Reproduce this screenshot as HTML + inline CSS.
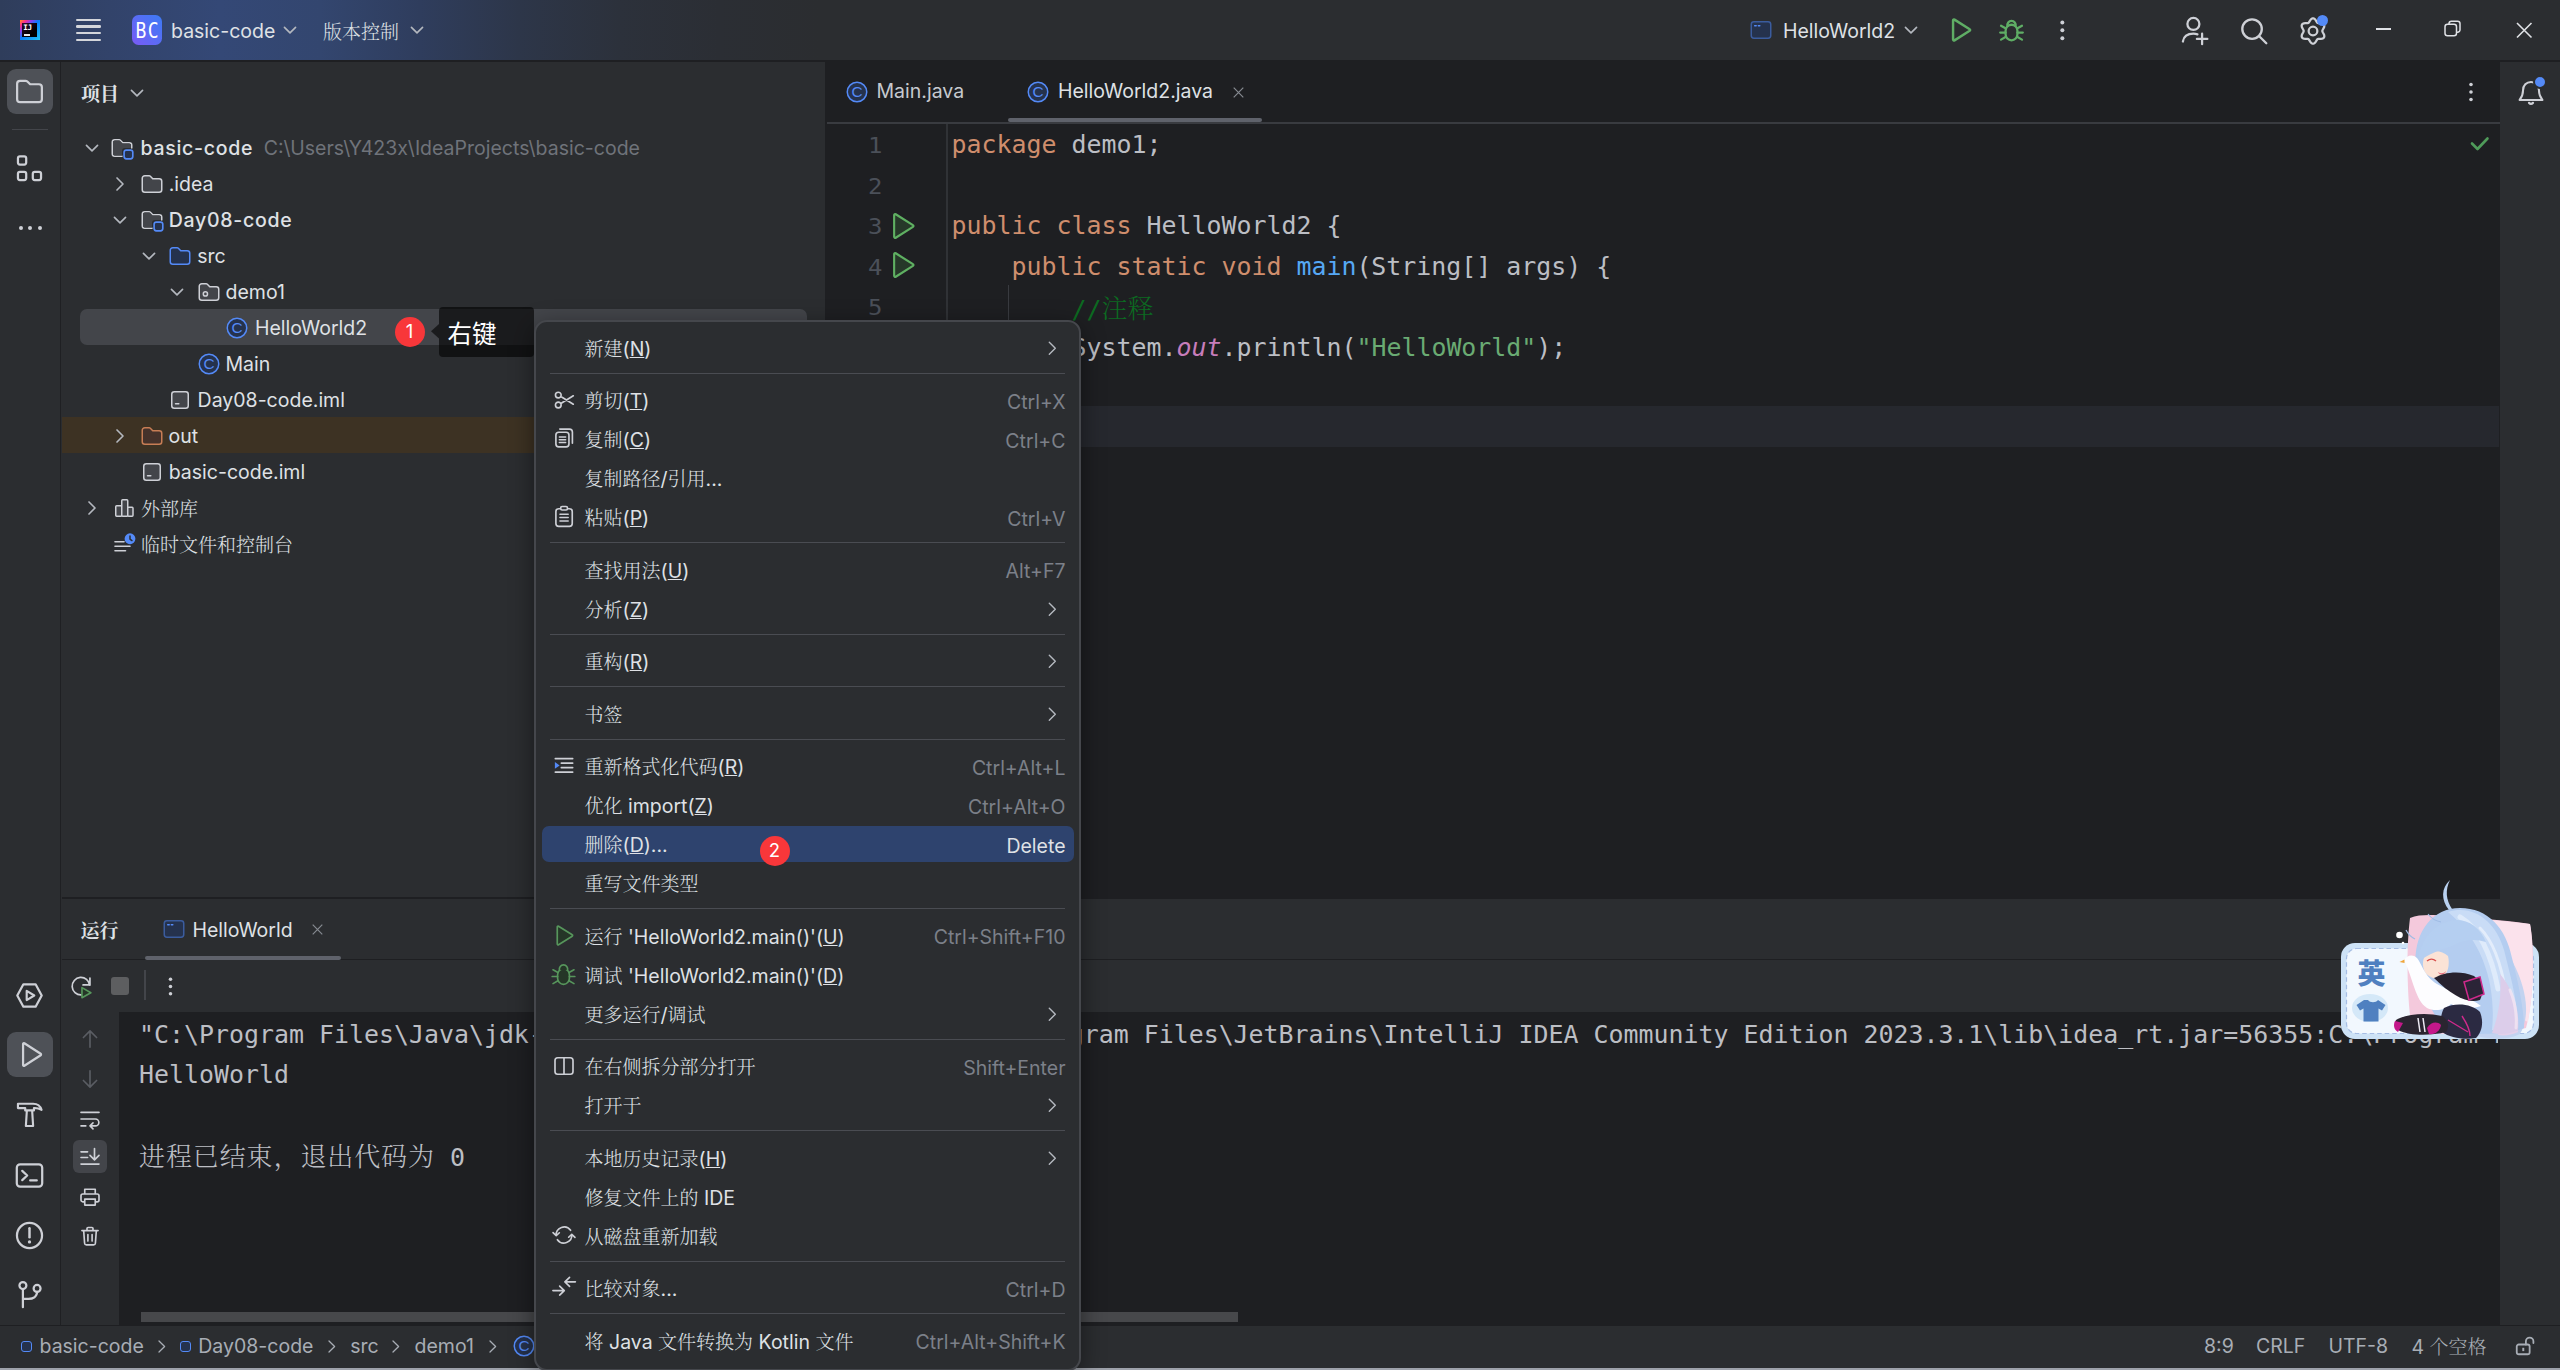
<!DOCTYPE html>
<html lang="zh-CN"><head><meta charset="utf-8"><title>basic-code – HelloWorld2.java</title>
<style>
html,body{margin:0;padding:0}
body{width:2560px;height:1370px;overflow:hidden;position:relative;background:#2b2d30;
 font-family:"Inter","Liberation Sans","Noto Serif CJK SC",sans-serif;font-size:19.5px;color:#dfe1e5;-webkit-font-smoothing:antialiased}
.abs{position:absolute}
.t{position:absolute;white-space:pre;line-height:36px;height:36px}
.g{color:#6f737a}
.b{font-weight:500;letter-spacing:.72px}
.mono{font-family:"DejaVu Sans Mono","Liberation Mono","Noto Serif CJK SC",monospace;font-size:24.92px}
svg{position:absolute;overflow:visible}
.cjk{font-family:"Noto Serif CJK SC","Liberation Serif",serif;font-size:19px;font-weight:300}
u{text-decoration:underline;text-underline-offset:1.3px;text-decoration-thickness:1.4px}
</style></head>
<body>
<div class="abs" style="left:0;top:0;width:2560px;height:60px;background:linear-gradient(90deg,#2f3d5b 0px,#32436a 110px,#344876 220px,#33466f 320px,#2f3d5d 420px,#2d3649 520px,#2c313b 620px,#2b2e34 720px,#2b2d30 820px)"></div>
<div class="abs" style="left:0px;top:60px;width:2560px;height:2px;background:#1e1f22;"></div>
<div class="abs" style="left:20px;top:20px;width:20px;height:20px;background:linear-gradient(135deg,#ff9419 0%,#ff2d8a 16%,#8a3df0 30%,#0a7cfa 48%,#21c8f5 100%)"></div>
<div class="abs" style="left:22.3px;top:23px;width:15px;height:14.3px;background:linear-gradient(135deg,#2a0a2e,#000 70%)"></div>
<div class="abs" style="left:23.3px;top:23px;font:700 7.6px/9px 'DejaVu Sans Mono','Liberation Mono',monospace;color:#fff;letter-spacing:-.3px">IJ</div>
<div class="abs" style="left:24.3px;top:34.4px;width:5.7px;height:1.2px;background:#e8e8ec;"></div>
<div class="abs" style="left:76.3px;top:18.5px;width:24.4px;height:2.4px;background:#d4d6db;border-radius:1.2px"></div>
<div class="abs" style="left:76.3px;top:25.2px;width:24.4px;height:2.4px;background:#d4d6db;border-radius:1.2px"></div>
<div class="abs" style="left:76.3px;top:31.900000000000002px;width:24.4px;height:2.4px;background:#d4d6db;border-radius:1.2px"></div>
<div class="abs" style="left:76.3px;top:38.599999999999994px;width:24.4px;height:2.4px;background:#d4d6db;border-radius:1.2px"></div>
<div class="abs" style="left:132px;top:15px;width:30px;height:30px;border-radius:6.5px;background:linear-gradient(45deg,#7a5af5 0%,#5a6cf5 50%,#3b7bf5 100%)"></div>
<div class="abs" style="left:132px;top:15px;width:30px;height:30px;line-height:31px;text-align:center;font-family:'DejaVu Sans Mono','Liberation Mono',monospace;font-size:18px;font-weight:400;color:#fff;letter-spacing:1.3px;text-indent:1.3px;transform:scaleY(1.19)">BC</div>
<div class="t " style="left:171px;top:12.5px;line-height:36px;height:36px;">basic-code</div>
<svg style="left:277.7px;top:18.3px" width="24" height="24" viewBox="0 0 16 16" fill="none" ><path d="M4.3 6.3 L8 9.9 L11.7 6.3" stroke="#b4b8bf" fill="none" stroke-width="1.1" stroke-linecap="round" stroke-linejoin="round" /></svg>
<div class="t cjk" style="left:323px;top:12.5px;line-height:36px;height:36px;">版本控制</div>
<svg style="left:405.2px;top:18.3px" width="24" height="24" viewBox="0 0 16 16" fill="none" ><path d="M4.3 6.3 L8 9.9 L11.7 6.3" stroke="#b4b8bf" fill="none" stroke-width="1.1" stroke-linecap="round" stroke-linejoin="round" /></svg>
<svg style="left:1748.8px;top:18.0px" width="24" height="24" viewBox="0 0 16 16" fill="none" ><rect x="1.5" y="2.5" width="13" height="11" rx="1.8" fill="#25324d" stroke="#3b5c9e"/><path d="M3.8 5.2h1M6.2 5.2h1" stroke="#548af7" fill="none" stroke-width="1" stroke-linecap="round" stroke-linejoin="round" /></svg>
<div class="t " style="left:1783px;top:12.5px;line-height:36px;height:36px;">HelloWorld2</div>
<svg style="left:1899.2px;top:18.3px" width="24" height="24" viewBox="0 0 16 16" fill="none" ><path d="M4.3 6.3 L8 9.9 L11.7 6.3" stroke="#b4b8bf" fill="none" stroke-width="1.1" stroke-linecap="round" stroke-linejoin="round" /></svg>
<svg style="left:1944.6px;top:15.2px" width="30" height="30" viewBox="0 0 16 16" fill="none" ><path d="M4.3 2.9v10.2a.5.5 0 0 0 .76.43l8.1-5.1a.5.5 0 0 0 0-.86l-8.1-5.1a.5.5 0 0 0-.76.43z" stroke="#5fad65" fill="none" stroke-width="1.3" stroke-linecap="round" stroke-linejoin="round" /></svg>
<svg style="left:1997.5px;top:16.7px" width="27" height="27" viewBox="0 0 16 16" fill="none" ><path d="M4.5 8.2c0-2 1.57-3.6 3.5-3.6s3.5 1.6 3.5 3.6v2c0 2-1.57 3.6-3.5 3.6s-3.5-1.6-3.5-3.6z" stroke="#5fad65" fill="none" stroke-width="1.35" stroke-linecap="round" stroke-linejoin="round" /><path d="M5.6 5.3A2.45 2.45 0 0 1 8 2.3a2.45 2.45 0 0 1 2.4 3" stroke="#5fad65" fill="none" stroke-width="1.35" stroke-linecap="round" stroke-linejoin="round" /><path d="M1.3 9.2h3.2M11.5 9.2h3.2M1.8 5.2l2.9 1.6M14.2 5.2l-2.9 1.6M1.8 13.4l2.9-1.7M14.2 13.4l-2.9-1.7" stroke="#5fad65" fill="none" stroke-width="1.35" stroke-linecap="round" stroke-linejoin="round" /></svg>
<svg style="left:2050.65px;top:18.85px" width="22.7" height="22.7" viewBox="0 0 16 16" fill="none" ><circle cx="8" cy="2.5" r="1.4" fill="#ced0d6"/><circle cx="8" cy="8" r="1.4" fill="#ced0d6"/><circle cx="8" cy="13.5" r="1.4" fill="#ced0d6"/></svg>
<svg style="left:2179.0px;top:16.0px" width="30" height="30" viewBox="0 0 20 20" fill="none" ><path d="M9.600 9.300a4 4 0 1 0 0-8 4 4 0 0 0 0 8zM2.600 17c.500-3.200 3.100-5.200 7-5.200 1 0 1.900.140 2.700.420M15.400 11.800v7M11.900 15.300h7" stroke="#ced0d6" fill="none" stroke-width="1.5" stroke-linecap="round" stroke-linejoin="round" /></svg>
<svg style="left:2238.5px;top:15.5px" width="30" height="30" viewBox="0 0 20 20" fill="none" ><path d="M8.700 15.200a6.500 6.500 0 1 0 0-13 6.500 6.500 0 0 0 0 13zM13.500 13.500l4.700 4.700" stroke="#ced0d6" fill="none" stroke-width="1.55" stroke-linecap="round" stroke-linejoin="round" /></svg>
<svg style="left:2297.5px;top:16.0px" width="30" height="30" viewBox="0 0 20 20" fill="none" ><path d="M16.20 10.00L16.33 10.55L16.67 11.18L17.10 11.90L17.45 12.71L17.56 13.53L17.36 14.25L16.84 14.79L16.07 15.09L15.20 15.20L14.35 15.19L13.64 15.20L13.10 15.37L12.69 15.76L12.32 16.37L11.90 17.10L11.38 17.80L10.73 18.31L10.00 18.50L9.27 18.31L8.62 17.80L8.10 17.10L7.68 16.37L7.31 15.76L6.90 15.37L6.36 15.20L5.65 15.19L4.80 15.20L3.93 15.09L3.16 14.79L2.64 14.25L2.44 13.53L2.55 12.71L2.90 11.90L3.33 11.18L3.67 10.55L3.80 10.00L3.67 9.45L3.33 8.82L2.90 8.10L2.55 7.29L2.44 6.47L2.64 5.75L3.16 5.21L3.93 4.91L4.80 4.80L5.65 4.81L6.36 4.80L6.90 4.63L7.31 4.24L7.68 3.63L8.10 2.90L8.62 2.20L9.27 1.69L10.00 1.50L10.73 1.69L11.38 2.20L11.90 2.90L12.32 3.63L12.69 4.24L13.10 4.63L13.64 4.80L14.35 4.81L15.20 4.80L16.07 4.91L16.84 5.21L17.36 5.75L17.56 6.47L17.45 7.29L17.10 8.10L16.67 8.82L16.33 9.45z" stroke="#ced0d6" stroke-width="1.5" stroke-linejoin="round"/><circle cx="10" cy="10" r="2.9" stroke="#ced0d6" stroke-width="1.5"/></svg>
<div class="abs" style="left:2317px;top:15px;width:11px;height:11px;border-radius:50%;background:#548af7"></div>
<div class="abs" style="left:2376px;top:28.2px;width:15px;height:1.6px;background:#dfe1e5;"></div>
<svg style="left:2444px;top:20px" width="18" height="18" viewBox="0 0 18 18" fill="none" ><rect x="1" y="4.2" width="11.5" height="11.5" rx="2.5" stroke="#dfe1e5" stroke-width="1.5"/><path d="M5 4V3.6A2.4 2.4 0 0 1 7.4 1.2h6.2A2.4 2.4 0 0 1 16 3.6v6.2a2.4 2.4 0 0 1-2.4 2.4h-.6" stroke="#dfe1e5" stroke-width="1.5"/></svg>
<svg style="left:2516px;top:22px" width="17" height="17" viewBox="0 0 17 17" fill="none" ><path d="M1 1l14.5 14.5M15.5 1L1 15.5" stroke="#dfe1e5" stroke-width="1.6"/></svg>
<div class="abs" style="left:0px;top:62px;width:60px;height:1263px;background:#2b2d30;"></div>
<div class="abs" style="left:60px;top:62px;width:1.2px;height:1263px;background:#1f2023;"></div>
<div class="abs" style="left:7px;top:69px;width:46px;height:45px;background:#4e5157;border-radius:9px"></div>
<svg style="left:13.2px;top:75.0px" width="33" height="33" viewBox="0 0 20 20" fill="none" ><path d="M2.5 5.3c0-1 .8-1.8 1.8-1.8h3.3c.4 0 .8.16 1.1.44L10.4 5.6h5.3c1 0 1.8.8 1.8 1.8v7.3c0 1-.8 1.8-1.8 1.8H4.3c-1 0-1.8-.8-1.8-1.8z" stroke="#ced0d6" fill="none" stroke-width="1.35" stroke-linecap="round" stroke-linejoin="round" /></svg>
<div class="abs" style="left:12px;top:129.3px;width:36px;height:1px;background:#43454a;"></div>
<svg style="left:13.2px;top:151.5px" width="33" height="33" viewBox="0 0 20 20" fill="none" ><rect x="3" y="2.6" width="5" height="5" rx="1.2" stroke="#ced0d6" stroke-width="1.35"/><rect x="3" y="12" width="5" height="5" rx="1.2" stroke="#ced0d6" stroke-width="1.35"/><rect x="12" y="12" width="5" height="5" rx="1.2" stroke="#ced0d6" stroke-width="1.35"/></svg>
<div class="abs" style="left:18.5px;top:226px;width:4px;height:4px;border-radius:50%;background:#ced0d6"></div>
<div class="abs" style="left:28px;top:226px;width:4px;height:4px;border-radius:50%;background:#ced0d6"></div>
<div class="abs" style="left:37.5px;top:226px;width:4px;height:4px;border-radius:50%;background:#ced0d6"></div>
<svg style="left:13.2px;top:978.5px" width="33" height="33" viewBox="0 0 20 20" fill="none" ><path d="M6.3 3.2h7.4l3.7 6.8-3.7 6.8H6.3L2.6 10z" stroke="#ced0d6" fill="none" stroke-width="1.35" stroke-linecap="round" stroke-linejoin="round" /><path d="M8.3 7.2v5.6L12.9 10z" stroke="#ced0d6" fill="none" stroke-width="1.3" stroke-linecap="round" stroke-linejoin="round" /></svg>
<div class="abs" style="left:7px;top:1032px;width:46px;height:45px;background:#4e5157;border-radius:9px"></div>
<svg style="left:13.7px;top:1038.0px" width="33" height="33" viewBox="0 0 20 20" fill="none" ><path d="M5.5 3.6v12.8a.5.5 0 0 0 .77.42l9.9-6.4a.5.5 0 0 0 0-.84l-9.9-6.4a.5.5 0 0 0-.77.42z" stroke="#ced0d6" fill="none" stroke-width="1.35" stroke-linecap="round" stroke-linejoin="round" /></svg>
<svg style="left:13.2px;top:1097.5px" width="33" height="33" viewBox="0 0 20 20" fill="none" ><path d="M3 3.500h9.200c2.400 0 4.400 1.400 5.100 3.700-1.400-.800-2.900-1.200-4.600-1.100v1.400H7.400V6.100H3zM8.4 7.6L7.8 17h4.4l-.6-9.4" stroke="#ced0d6" fill="none" stroke-width="1.3" stroke-linecap="round" stroke-linejoin="round" /></svg>
<svg style="left:13.2px;top:1158.5px" width="33" height="33" viewBox="0 0 20 20" fill="none" ><rect x="2.3" y="3.3" width="15.4" height="13.4" rx="2" stroke="#ced0d6" stroke-width="1.35"/><path d="M5.6 7.2L8.6 10l-3 2.8M10.4 13h4" stroke="#ced0d6" fill="none" stroke-width="1.35" stroke-linecap="round" stroke-linejoin="round" /></svg>
<svg style="left:13.2px;top:1218.5px" width="33" height="33" viewBox="0 0 20 20" fill="none" ><circle cx="10" cy="10" r="7.6" stroke="#ced0d6" stroke-width="1.35"/><path d="M10 5.6v5.4" stroke="#ced0d6" fill="none" stroke-width="1.5" stroke-linecap="round" stroke-linejoin="round" /><circle cx="10" cy="13.9" r="1" fill="#ced0d6"/></svg>
<svg style="left:13.2px;top:1277.5px" width="33" height="33" viewBox="0 0 20 20" fill="none" ><circle cx="6" cy="4.6" r="2.1" stroke="#ced0d6" stroke-width="1.35"/><circle cx="14.6" cy="6.3" r="2.1" stroke="#ced0d6" stroke-width="1.35"/><path d="M6 6.7v11M14.6 8.4c0 3-2.6 4.3-5.2 4.3H6" stroke="#ced0d6" fill="none" stroke-width="1.35" stroke-linecap="round" stroke-linejoin="round" /></svg>
<div class="abs" style="left:61.5px;top:62px;width:763.5px;height:835px;background:#2b2d30;"></div>
<div class="t cjk" style="left:81px;top:74.5px;line-height:36px;height:36px;font-weight:700;color:#dfe1e5">项目</div>
<svg style="left:125.0px;top:80.8px" width="24" height="24" viewBox="0 0 16 16" fill="none" ><path d="M4.3 6.3 L8 9.9 L11.7 6.3" stroke="#b4b8bf" fill="none" stroke-width="1.1" stroke-linecap="round" stroke-linejoin="round" /></svg>
<div class="abs" style="left:61.5px;top:417px;width:763.5px;height:36px;background:#3d3223;"></div>
<div class="abs" style="left:79.5px;top:309px;width:727px;height:35.7px;background:#43454a;border-radius:7px"></div>
<svg style="left:80.0px;top:135.8px" width="24" height="24" viewBox="0 0 16 16" fill="none" ><path d="M4.3 6.3 L8 9.9 L11.7 6.3" stroke="#b4b8bf" fill="none" stroke-width="1.1" stroke-linecap="round" stroke-linejoin="round" /></svg>
<svg style="left:110.3px;top:135.5px" width="24" height="24" viewBox="0 0 16 16" fill="none" ><path d="M14.5 8V6.2c0-.94-.76-1.7-1.7-1.7H8.5L6.9 2.83a1.13 1.13 0 0 0-.8-.33H3.2c-.94 0-1.7.76-1.7 1.7v7.6c0 .94.76 1.7 1.7 1.7H8" stroke="#ced0d6" fill="none" stroke-width="1" stroke-linecap="round" stroke-linejoin="round" /><path d="M2 4.2c0-.66.54-1.2 1.2-1.2h2.9c.17 0 .33.07.45.19L8.3 5h4.5c.66 0 1.2.54 1.2 1.2V8H10a2 2 0 0 0-2 2v3H3.2c-.66 0-1.2-.54-1.2-1.2z" fill="#43454a"/><rect x="9.4" y="9.4" width="5.8" height="5.8" rx="1.5" fill="#25324d" stroke="#548af7" stroke-width="1.1"/></svg>
<div class="t " style="left:140.5px;top:130.0px;line-height:36px;height:36px;"><span class="b">basic-code</span><span class="g" style="margin-left:10.5px">C:\Users\Y423x\IdeaProjects\basic-code</span></div>
<svg style="left:108.0px;top:171.5px" width="24" height="24" viewBox="0 0 16 16" fill="none" ><path d="M6 4 L10 8 L6 12" stroke="#b4b8bf" fill="none" stroke-width="1.1" stroke-linecap="round" stroke-linejoin="round" /></svg>
<svg style="left:139.7px;top:171.5px" width="24" height="24" viewBox="0 0 16 16" fill="none" ><path d="M1.5 4.2c0-.94.76-1.7 1.7-1.7h2.9c.3 0 .58.12.8.33L8.5 4.5h4.3c.94 0 1.7.76 1.7 1.7v5.6c0 .94-.76 1.7-1.7 1.7H3.2c-.94 0-1.7-.76-1.7-1.7z" stroke="#ced0d6" fill="#43454a" stroke-width="1" stroke-linecap="round" stroke-linejoin="round" /></svg>
<div class="t " style="left:168.7px;top:166.0px;line-height:36px;height:36px;">.idea</div>
<svg style="left:108.0px;top:207.8px" width="24" height="24" viewBox="0 0 16 16" fill="none" ><path d="M4.3 6.3 L8 9.9 L11.7 6.3" stroke="#b4b8bf" fill="none" stroke-width="1.1" stroke-linecap="round" stroke-linejoin="round" /></svg>
<svg style="left:139.7px;top:207.5px" width="24" height="24" viewBox="0 0 16 16" fill="none" ><path d="M14.5 8V6.2c0-.94-.76-1.7-1.7-1.7H8.5L6.9 2.83a1.13 1.13 0 0 0-.8-.33H3.2c-.94 0-1.7.76-1.7 1.7v7.6c0 .94.76 1.7 1.7 1.7H8" stroke="#ced0d6" fill="none" stroke-width="1" stroke-linecap="round" stroke-linejoin="round" /><path d="M2 4.2c0-.66.54-1.2 1.2-1.2h2.9c.17 0 .33.07.45.19L8.3 5h4.5c.66 0 1.2.54 1.2 1.2V8H10a2 2 0 0 0-2 2v3H3.2c-.66 0-1.2-.54-1.2-1.2z" fill="#43454a"/><rect x="9.4" y="9.4" width="5.8" height="5.8" rx="1.5" fill="#25324d" stroke="#548af7" stroke-width="1.1"/></svg>
<div class="t " style="left:168.7px;top:202.0px;line-height:36px;height:36px;"><span class="b">Day08-code</span></div>
<svg style="left:137.0px;top:243.8px" width="24" height="24" viewBox="0 0 16 16" fill="none" ><path d="M4.3 6.3 L8 9.9 L11.7 6.3" stroke="#b4b8bf" fill="none" stroke-width="1.1" stroke-linecap="round" stroke-linejoin="round" /></svg>
<svg style="left:168.0px;top:243.5px" width="24" height="24" viewBox="0 0 16 16" fill="none" ><path d="M1.5 4.2c0-.94.76-1.7 1.7-1.7h2.9c.3 0 .58.12.8.33L8.5 4.5h4.3c.94 0 1.7.76 1.7 1.7v5.6c0 .94-.76 1.7-1.7 1.7H3.2c-.94 0-1.7-.76-1.7-1.7z" stroke="#548af7" fill="#25324d" stroke-width="1" stroke-linecap="round" stroke-linejoin="round" /></svg>
<div class="t " style="left:197.3px;top:238.0px;line-height:36px;height:36px;">src</div>
<svg style="left:165.0px;top:279.8px" width="24" height="24" viewBox="0 0 16 16" fill="none" ><path d="M4.3 6.3 L8 9.9 L11.7 6.3" stroke="#b4b8bf" fill="none" stroke-width="1.1" stroke-linecap="round" stroke-linejoin="round" /></svg>
<svg style="left:196.7px;top:279.5px" width="24" height="24" viewBox="0 0 16 16" fill="none" ><path d="M1.5 4.2c0-.94.76-1.7 1.7-1.7h2.9c.3 0 .58.12.8.33L8.5 4.5h4.3c.94 0 1.7.76 1.7 1.7v5.6c0 .94-.76 1.7-1.7 1.7H3.2c-.94 0-1.7-.76-1.7-1.7z" stroke="#ced0d6" fill="#43454a" stroke-width="1" stroke-linecap="round" stroke-linejoin="round" /><circle cx="5.6" cy="9.3" r="1.4" stroke="#ced0d6" fill="none"/></svg>
<div class="t " style="left:225.5px;top:274.0px;line-height:36px;height:36px;">demo1</div>
<svg style="left:225.0px;top:315.5px" width="24" height="24" viewBox="0 0 16 16" fill="none" ><circle cx="8" cy="8" r="6.5" fill="#25324d" stroke="#548af7"/><text x="8" y="11.65" text-anchor="middle" font-family="Liberation Sans,Arial,sans-serif" font-size="10.3" fill="#548af7">C</text></svg>
<div class="t " style="left:255px;top:310.0px;line-height:36px;height:36px;">HelloWorld2</div>
<svg style="left:197.0px;top:351.5px" width="24" height="24" viewBox="0 0 16 16" fill="none" ><circle cx="8" cy="8" r="6.5" fill="#25324d" stroke="#548af7"/><text x="8" y="11.65" text-anchor="middle" font-family="Liberation Sans,Arial,sans-serif" font-size="10.3" fill="#548af7">C</text></svg>
<div class="t " style="left:225.4px;top:346.0px;line-height:36px;height:36px;">Main</div>
<svg style="left:168.0px;top:387.5px" width="24" height="24" viewBox="0 0 16 16" fill="none" ><rect x="2.5" y="2.5" width="11" height="11" rx="1.7" fill="#43454a" stroke="#ced0d6"/><path d="M5 10.5h2.2" stroke="#ced0d6" fill="none" stroke-width="1" stroke-linecap="round" stroke-linejoin="round" /></svg>
<div class="t " style="left:197.6px;top:382.0px;line-height:36px;height:36px;">Day08-code.iml</div>
<svg style="left:108.0px;top:423.5px" width="24" height="24" viewBox="0 0 16 16" fill="none" ><path d="M6 4 L10 8 L6 12" stroke="#b4b8bf" fill="none" stroke-width="1.1" stroke-linecap="round" stroke-linejoin="round" /></svg>
<svg style="left:139.7px;top:423.5px" width="24" height="24" viewBox="0 0 16 16" fill="none" ><path d="M1.5 4.2c0-.94.76-1.7 1.7-1.7h2.9c.3 0 .58.12.8.33L8.5 4.5h4.3c.94 0 1.7.76 1.7 1.7v5.6c0 .94-.76 1.7-1.7 1.7H3.2c-.94 0-1.7-.76-1.7-1.7z" stroke="#c77d55" fill="#45322b" stroke-width="1" stroke-linecap="round" stroke-linejoin="round" /></svg>
<div class="t " style="left:168.5px;top:418.0px;line-height:36px;height:36px;">out</div>
<svg style="left:140.0px;top:459.5px" width="24" height="24" viewBox="0 0 16 16" fill="none" ><rect x="2.5" y="2.5" width="11" height="11" rx="1.7" fill="#43454a" stroke="#ced0d6"/><path d="M5 10.5h2.2" stroke="#ced0d6" fill="none" stroke-width="1" stroke-linecap="round" stroke-linejoin="round" /></svg>
<div class="t " style="left:168.7px;top:454.0px;line-height:36px;height:36px;">basic-code.iml</div>
<svg style="left:80.0px;top:495.5px" width="24" height="24" viewBox="0 0 16 16" fill="none" ><path d="M6 4 L10 8 L6 12" stroke="#b4b8bf" fill="none" stroke-width="1.1" stroke-linecap="round" stroke-linejoin="round" /></svg>
<svg style="left:111.5px;top:495.5px" width="24" height="24" viewBox="0 0 16 16" fill="none" ><rect x="2.5" y="6.5" width="4" height="7" rx=".6" fill="#43454a" stroke="#ced0d6"/><rect x="6.5" y="2.5" width="4" height="11" rx=".6" fill="#43454a" stroke="#ced0d6"/><rect x="10.5" y="7.5" width="3.5" height="6" rx=".6" fill="#43454a" stroke="#ced0d6"/></svg>
<div class="t " style="left:141px;top:490.0px;line-height:36px;height:36px;"><span class="cjk">外部库</span></div>
<svg style="left:111.5px;top:531.5px" width="24" height="24" viewBox="0 0 16 16" fill="none" ><path d="M2 6.5h6M2 9.5h10M2 12.5h7" stroke="#ced0d6" fill="none" stroke-width="1.1" stroke-linecap="round" stroke-linejoin="round" /><circle cx="12" cy="4.5" r="3.6" fill="#548af7"/><path d="M12 2.6v2.1l1.3 1" stroke="#2b2d30" fill="none" stroke-width="1" stroke-linecap="round" stroke-linejoin="round" /></svg>
<div class="t " style="left:141px;top:526.0px;line-height:36px;height:36px;"><span class="cjk">临时文件和控制台</span></div>
<div class="abs" style="left:825px;top:62px;width:1675px;height:836px;background:#1e1f22;"></div>
<div class="abs" style="left:826.5px;top:122px;width:1673px;height:1.6px;background:#393b40;"></div>
<svg style="left:845.0px;top:80.0px" width="24" height="24" viewBox="0 0 16 16" fill="none" ><circle cx="8" cy="8" r="6.5" fill="#25324d" stroke="#548af7"/><text x="8" y="11.65" text-anchor="middle" font-family="Liberation Sans,Arial,sans-serif" font-size="10.3" fill="#548af7">C</text></svg>
<div class="t " style="left:876.5px;top:73.3px;line-height:36px;height:36px;color:#c6c9cf">Main.java</div>
<svg style="left:1026.0px;top:80.0px" width="24" height="24" viewBox="0 0 16 16" fill="none" ><circle cx="8" cy="8" r="6.5" fill="#25324d" stroke="#548af7"/><text x="8" y="11.65" text-anchor="middle" font-family="Liberation Sans,Arial,sans-serif" font-size="10.3" fill="#548af7">C</text></svg>
<div class="t " style="left:1058px;top:73.3px;line-height:36px;height:36px;color:#dfe1e5">HelloWorld2.java</div>
<svg style="left:1232.5px;top:86.5px" width="11" height="11" viewBox="0 0 11 11" fill="none" ><path d="M.7.7l9.6 9.6M10.3.7L.7 10.3" stroke="#868a91" stroke-width="1.2"/></svg>
<div class="abs" style="left:1008px;top:117.8px;width:254px;height:4.6px;background:#5f626b;border-radius:3px"></div>
<svg style="left:2460.0px;top:81.0px" width="22" height="22" viewBox="0 0 16 16" fill="none" ><circle cx="8" cy="2.5" r="1.3" fill="#ced0d6"/><circle cx="8" cy="8" r="1.3" fill="#ced0d6"/><circle cx="8" cy="13.5" r="1.3" fill="#ced0d6"/></svg>
<svg style="left:2470px;top:136px" width="20" height="16" viewBox="0 0 20 16" fill="none" ><path d="M2 7.5l5.5 5.5L17.5 2.5" stroke="#4f9b5a" stroke-width="2.6" stroke-linecap="round" stroke-linejoin="round"/></svg>
<div class="abs" style="left:946.2px;top:124px;width:1.7px;height:774px;background:#303236;"></div>
<div class="abs" style="left:948px;top:406px;width:1551px;height:41px;background:#26282e;"></div>
<div class="abs" style="left:1008px;top:285px;width:1.2px;height:60px;background:#393b40;"></div>
<div class="abs mono" style="left:826px;top:126.1px;width:56.5px;height:40.5px;line-height:40.5px;text-align:right;color:#4b5059;font-size:21.8px;transform:scaleX(1.1);transform-origin:100% 50%">1</div>
<div class="abs mono" style="left:826px;top:166.6px;width:56.5px;height:40.5px;line-height:40.5px;text-align:right;color:#4b5059;font-size:21.8px;transform:scaleX(1.1);transform-origin:100% 50%">2</div>
<div class="abs mono" style="left:826px;top:207.1px;width:56.5px;height:40.5px;line-height:40.5px;text-align:right;color:#4b5059;font-size:21.8px;transform:scaleX(1.1);transform-origin:100% 50%">3</div>
<div class="abs mono" style="left:826px;top:247.6px;width:56.5px;height:40.5px;line-height:40.5px;text-align:right;color:#4b5059;font-size:21.8px;transform:scaleX(1.1);transform-origin:100% 50%">4</div>
<div class="abs mono" style="left:826px;top:288.1px;width:56.5px;height:40.5px;line-height:40.5px;text-align:right;color:#4b5059;font-size:21.8px;transform:scaleX(1.1);transform-origin:100% 50%">5</div>
<svg style="left:885.4px;top:208.6px" width="34" height="34" viewBox="0 0 16 16" fill="none" ><path d="M4.3 2.9v10.2a.5.5 0 0 0 .76.43l8.1-5.1a.5.5 0 0 0 0-.86l-8.1-5.1a.5.5 0 0 0-.76.43z" stroke="#5fb062" fill="#263829" stroke-width="1.0" stroke-linecap="round" stroke-linejoin="round" /></svg>
<svg style="left:885.4px;top:248.1px" width="34" height="34" viewBox="0 0 16 16" fill="none" ><path d="M4.3 2.9v10.2a.5.5 0 0 0 .76.43l8.1-5.1a.5.5 0 0 0 0-.86l-8.1-5.1a.5.5 0 0 0-.76.43z" stroke="#5fb062" fill="#263829" stroke-width="1.0" stroke-linecap="round" stroke-linejoin="round" /></svg>
<div class="abs mono" style="left:951.5px;top:125.0px;height:40.5px;line-height:40.5px;white-space:pre"><span style="color:#cf8e6d">package</span><span style="color:#bcbec4"> demo1;</span></div>
<div class="abs mono" style="left:951.5px;top:165.5px;height:40.5px;line-height:40.5px;white-space:pre"></div>
<div class="abs mono" style="left:951.5px;top:206.0px;height:40.5px;line-height:40.5px;white-space:pre"><span style="color:#cf8e6d">public class</span><span style="color:#bcbec4"> HelloWorld2 {</span></div>
<div class="abs mono" style="left:951.5px;top:246.5px;height:40.5px;line-height:40.5px;white-space:pre">    <span style="color:#cf8e6d">public static void </span><span style="color:#56a8f5">main</span><span style="color:#bcbec4">(String[] args) {</span></div>
<div class="abs mono" style="left:951.5px;top:287.0px;height:40.5px;line-height:40.5px;white-space:pre">        <span style="color:#0c6a21">//<span class="cjk" style="font-size:26px">注释</span></span></div>
<div class="abs mono" style="left:951.5px;top:327.5px;height:40.5px;line-height:40.5px;white-space:pre">        <span style="color:#bcbec4">System.</span><span style="color:#c77dbb;font-style:italic">out</span><span style="color:#bcbec4">.println(</span><span style="color:#6aab73">"HelloWorld"</span><span style="color:#bcbec4">);</span></div>
<div class="abs" style="left:61.5px;top:897px;width:2438.5px;height:2px;background:#1e1f22;"></div>
<div class="abs" style="left:61.5px;top:899px;width:2438.5px;height:60px;background:#2b2d30;"></div>
<div class="abs" style="left:61.5px;top:958.6px;width:2438.5px;height:1.4px;background:#1e1f22;"></div>
<div class="abs" style="left:61.5px;top:960px;width:2438.5px;height:51.5px;background:#2b2d30;"></div>
<div class="t cjk" style="left:80.5px;top:911.5px;line-height:36px;height:36px;font-weight:700;color:#dfe1e5">运行</div>
<svg style="left:162.2px;top:916.5px" width="24" height="24" viewBox="0 0 16 16" fill="none" ><rect x="1.5" y="2.5" width="13" height="11" rx="1.8" fill="#25324d" stroke="#3b5c9e"/><path d="M3.8 5.2h1M6.2 5.2h1" stroke="#548af7" fill="none" stroke-width="1" stroke-linecap="round" stroke-linejoin="round" /></svg>
<div class="t " style="left:192.4px;top:911.5px;line-height:36px;height:36px;">HelloWorld</div>
<svg style="left:312.3px;top:923.5px" width="11" height="11" viewBox="0 0 11 11" fill="none" ><path d="M.7.7l9.6 9.6M10.3.7L.7 10.3" stroke="#868a91" stroke-width="1.2"/></svg>
<div class="abs" style="left:145px;top:955.8px;width:196px;height:4.4px;background:#5f626b;border-radius:3px"></div>
<svg style="left:69.0px;top:973.5px" width="25" height="25" viewBox="0 0 16 16" fill="none" ><path d="M13.2 7.2A5.6 5.6 0 1 0 7.8 13.4M13.4 2.6v4.4H9" stroke="#ced0d6" fill="none" stroke-width="1.1" stroke-linecap="round" stroke-linejoin="round" /><path d="M8.300 8.700v6.500l5.700-3.250z" stroke="#57965c" fill="#253627" stroke-width="1.05" stroke-linecap="round" stroke-linejoin="round" /></svg>
<div class="abs" style="left:111px;top:977px;width:18px;height:18px;background:#5d5e60;border-radius:3px"></div>
<div class="abs" style="left:144.3px;top:970px;width:1.4px;height:30px;background:#43454a;"></div>
<svg style="left:159.5px;top:975.5px" width="21" height="21" viewBox="0 0 16 16" fill="none" ><circle cx="8" cy="2.5" r="1.35" fill="#ced0d6"/><circle cx="8" cy="8" r="1.35" fill="#ced0d6"/><circle cx="8" cy="13.5" r="1.35" fill="#ced0d6"/></svg>
<div class="abs" style="left:61.5px;top:1011.5px;width:57px;height:313.5px;background:#2b2d30;"></div>
<div class="abs" style="left:118.5px;top:1011.5px;width:2381.5px;height:313.5px;background:#1e1f22;"></div>
<svg style="left:77.8px;top:1027.0px" width="24" height="24" viewBox="0 0 16 16" fill="none" ><path d="M8 13.5V2.8M3.6 7L8 2.6 12.4 7" stroke="#5a5d63" fill="none" stroke-width="1.1" stroke-linecap="round" stroke-linejoin="round" /></svg>
<svg style="left:77.8px;top:1066.5px" width="24" height="24" viewBox="0 0 16 16" fill="none" ><path d="M8 2.5v10.7M3.6 9L8 13.4 12.4 9" stroke="#5a5d63" fill="none" stroke-width="1.1" stroke-linecap="round" stroke-linejoin="round" /></svg>
<svg style="left:77.8px;top:1107.0px" width="24" height="24" viewBox="0 0 16 16" fill="none" ><path d="M2 3.6h12M2 8h9.6a2.3 2.3 0 0 1 0 4.6H8.4M2 12.6h3.2M10 10.6l-2 2 2 2" stroke="#ced0d6" fill="none" stroke-width="1.1" stroke-linecap="round" stroke-linejoin="round" /></svg>
<div class="abs" style="left:73.3px;top:1140px;width:33.3px;height:32.7px;background:#43454a;border-radius:6px"></div>
<svg style="left:77.8px;top:1144.3px" width="24" height="24" viewBox="0 0 16 16" fill="none" ><path d="M2 5.2h4.4M2 9h4.4M2 13.4h12M11 3v7.4M8 7.6l3 3 3-3" stroke="#ced0d6" fill="none" stroke-width="1.1" stroke-linecap="round" stroke-linejoin="round" /></svg>
<svg style="left:77.8px;top:1184.5px" width="24" height="24" viewBox="0 0 16 16" fill="none" ><path d="M4.5 6V2.8h7V6M4.5 11.2H3.2c-.66 0-1.2-.54-1.2-1.2V7.2C2 6.54 2.54 6 3.2 6h9.6c.66 0 1.2.54 1.2 1.2V10c0 .66-.54 1.2-1.2 1.2h-1.3M4.5 9.4h7v4h-7z" stroke="#ced0d6" fill="none" stroke-width="1.1" stroke-linecap="round" stroke-linejoin="round" /></svg>
<svg style="left:77.8px;top:1223.5px" width="24" height="24" viewBox="0 0 16 16" fill="none" ><path d="M2.6 4.4h10.8M6 4.2V3c0-.4.3-.7.7-.7h2.6c.4 0 .7.3.7.7v1.2M3.8 4.6l.6 8.2c.04.6.55 1.1 1.2 1.1h4.8c.65 0 1.16-.5 1.2-1.1l.6-8.2M6.6 7v4.4M9.4 7v4.4" stroke="#ced0d6" fill="none" stroke-width="1.1" stroke-linecap="round" stroke-linejoin="round" /></svg>
<div class="abs mono" style="left:139px;top:1015.0px;height:40.1px;line-height:40.1px;white-space:pre;color:#bcbec4;width:2359px;overflow:hidden">"C:\Program Files\Java\jdk-21\bin\java.exe" "-javaagent:C:\Program Files\JetBrains\IntelliJ IDEA Community Edition 2023.3.1\lib\idea_rt.jar=56355:C:\Program Files\JetBrains</div>
<div class="abs mono" style="left:139px;top:1055.1px;height:40.1px;line-height:40.1px;white-space:pre;color:#bcbec4;width:2359px;overflow:hidden">HelloWorld</div>
<div class="abs mono" style="left:139px;top:1095.2px;height:40.1px;line-height:40.1px;white-space:pre;color:#bcbec4;width:2359px;overflow:hidden"></div>
<div class="abs mono" style="left:139px;top:1135.3px;height:40.1px;line-height:40.1px;white-space:pre;color:#bcbec4;width:2359px;overflow:hidden"><span class="cjk" style="font-size:26px;letter-spacing:.9px">进程已结束，退出代码为</span> 0</div>
<div class="abs" style="left:140.5px;top:1311.5px;width:1097.5px;height:10.5px;background:#47484b;"></div>
<div class="abs" style="left:2500px;top:62px;width:60px;height:1263px;background:#2b2d30;"></div>
<svg style="left:2516.0px;top:77.5px" width="30" height="30" viewBox="0 0 20 20" fill="none" ><path d="M2.4 14.6C4 12.6 4.7 10.9 4.7 8.2 4.7 5 6.9 2.6 10 2.6s5.300 2.400 5.3 5.600c0 2.700.7 4.400 2.300 6.400z" stroke="#ced0d6" fill="none" stroke-width="1.35" stroke-linecap="round" stroke-linejoin="round" /><path d="M8.7 16.6c.4.4.8.6 1.3.6s.9-.2 1.300-.6" stroke="#ced0d6" fill="none" stroke-width="1.5" stroke-linecap="round" stroke-linejoin="round" /></svg>
<div class="abs" style="left:2532.7px;top:74.500px;width:10.6px;height:10.6px;border-radius:50%;background:#548af7;border:2px solid #2b2d30"></div>
<div class="abs" style="left:0px;top:1324.5px;width:2560px;height:1.5px;background:#1e1f22;"></div>
<div class="abs" style="left:0px;top:1326px;width:2560px;height:41.5px;background:#2b2d30;"></div>
<div class="abs" style="left:0px;top:1367.8px;width:2560px;height:2.2px;background:#9ea2ab;"></div>
<div class="abs" style="left:20.5px;top:1340.5px;width:9.6px;height:9.6px;border:1.8px solid #548af7;border-radius:3px;background:#25324d"></div>
<div class="t " style="left:39.5px;top:1327.7px;line-height:36px;height:36px;color:#a8adb5">basic-code</div>
<svg style="left:157.5px;top:1340px" width="8" height="13" viewBox="0 0 8 13" fill="none" ><path d="M1 1l5.6 5.5L1 12" stroke="#a8adb5" stroke-width="1.3" stroke-linecap="round" stroke-linejoin="round"/></svg>
<div class="abs" style="left:179.5px;top:1340.5px;width:9.6px;height:9.6px;border:1.8px solid #548af7;border-radius:3px;background:#25324d"></div>
<div class="t " style="left:198.3px;top:1327.7px;line-height:36px;height:36px;color:#a8adb5">Day08-code</div>
<svg style="left:327.5px;top:1340px" width="8" height="13" viewBox="0 0 8 13" fill="none" ><path d="M1 1l5.6 5.5L1 12" stroke="#a8adb5" stroke-width="1.3" stroke-linecap="round" stroke-linejoin="round"/></svg>
<div class="t " style="left:350.3px;top:1327.7px;line-height:36px;height:36px;color:#a8adb5">src</div>
<svg style="left:392px;top:1340px" width="8" height="13" viewBox="0 0 8 13" fill="none" ><path d="M1 1l5.6 5.5L1 12" stroke="#a8adb5" stroke-width="1.3" stroke-linecap="round" stroke-linejoin="round"/></svg>
<div class="t " style="left:414.5px;top:1327.7px;line-height:36px;height:36px;color:#a8adb5">demo1</div>
<svg style="left:489px;top:1340px" width="8" height="13" viewBox="0 0 8 13" fill="none" ><path d="M1 1l5.6 5.5L1 12" stroke="#a8adb5" stroke-width="1.3" stroke-linecap="round" stroke-linejoin="round"/></svg>
<svg style="left:512.0px;top:1334.0px" width="24" height="24" viewBox="0 0 16 16" fill="none" ><circle cx="8" cy="8" r="6.5" fill="#25324d" stroke="#548af7"/><text x="8" y="11.65" text-anchor="middle" font-family="Liberation Sans,Arial,sans-serif" font-size="10.3" fill="#548af7">C</text></svg>
<div class="t " style="left:2204px;top:1327.7px;line-height:36px;height:36px;color:#a8adb5">8:9</div>
<div class="t " style="left:2256px;top:1327.7px;line-height:36px;height:36px;color:#a8adb5">CRLF</div>
<div class="t " style="left:2328.5px;top:1327.7px;line-height:36px;height:36px;color:#a8adb5">UTF-8</div>
<div class="t " style="left:2411.5px;top:1327.7px;line-height:36px;height:36px;color:#a8adb5">4 <span class="cjk">个空格</span></div>
<svg style="left:2512.5px;top:1334.0px" width="24" height="24" viewBox="0 0 16 16" fill="none" ><rect x="2.5" y="7" width="8.6" height="6.5" rx="1.4" stroke="#a8adb5" stroke-width="1.2"/><path d="M8.6 7V4.9a2.5 2.5 0 0 1 5 0V6" stroke="#a8adb5" stroke-width="1.2" stroke-linecap="round"/><rect x="6.2" y="9.2" width="1.3" height="2.2" fill="#a8adb5"/></svg>
<svg style="left:2330px;top:870px" width="220" height="180" viewBox="0 0 220 180" fill="none" ><rect x="11" y="73" width="198" height="96" rx="14" fill="#cde2f6"/><rect x="16.500" y="78.500" width="187" height="85" rx="10" fill="#f2f8fe" stroke="#a6bde4" stroke-width="1.200" stroke-dasharray="4.500 3"/><path d="M80 48c10-4 24-3 36-2 28 2 58 4 84 8 5 24 4 74-4 104-28 8-84 8-114 2-5-30-6-80-2-112z" fill="#f4c9dc"/><path d="M140 48c22 2 42 4 60 6 4 24 4 66-2 98-16-6-22-40-58-104z" fill="#fbe2ec"/><path d="M150 60c22 8 38 36 44 62 4 18 2 32-4 42-12 6-30 6-42 2z" fill="#c3d3f0"/><path d="M176 112c8 14 14 32 12 50-6 3-14 4-20 3 6-14 10-32 8-53z" fill="#e4d0ea"/><path d="M86 100c-4-34 14-62 44-62 28 0 46 20 52 50 6 24 12 50 12 70-10 6-60 8-80 4-10-20-24-40-28-62z" fill="#b4cdf0"/><path d="M118 42c26-8 48 10 56 38 6 24 14 52 14 78-8 3-18 3-26 2 4-40-6-86-44-118z" fill="#c9dcf6"/><path d="M130 47c20 12 32 40 38 72" stroke="#e6f0fc" stroke-width="5" fill="none" opacity=".75" stroke-linecap="round"/><path d="M150 58c14 14 22 40 26 66" stroke="#eef4fd" stroke-width="3" fill="none" opacity=".7" stroke-linecap="round"/><path d="M170 104c12 14 20 36 18 56-8 4-18 5-26 3 6-16 10-36 8-59z" fill="#dccdea"/><path d="M180 120c5 12 7 26 6 38" stroke="#f3e6f3" stroke-width="3" fill="none" opacity=".8" stroke-linecap="round"/><path d="M119 40c-8-10-8-22 1-30-5 10-4 20 2 29z" fill="#b9d1f0"/><path d="M98 44c3 4 8 7 13 8M76 60c2 4 5 7 9 9" stroke="#9fbbe4" stroke-width="1.200" fill="none"/><circle cx="69.500" cy="65" r="3.300" fill="#fff"/><circle cx="73" cy="73" r="1.300" fill="#fff"/><path d="M96 84c6-4 16-4 22 2 2 8 0 18-6 22-8 2-16-2-18-8-2-6-1-12 2-16z" fill="#fbe3d6"/><path d="M97 91c3-2.500 6-2.500 9 0" stroke="#d8504e" stroke-width="1.400" fill="none"/><path d="M108 102c3 2 6 1.500 8-1-1 4-6 5-8 1z" fill="#e86a7c"/><path d="M88 92c2-22 16-40 38-42 14 0 24 8 30 22-12-4-24-2-34 4-12 4-24 8-34 16z" fill="#b5cff1"/><path d="M74 90c3-5 9-6 13-2 5 6 7 18 20 26 14 8 34 14 44 22-12 4-22 2-30-2-6 6-16 8-24 4-12-8-14-30-23-48z" fill="#fdfdff"/><path d="M74.500 89.500l-5 2.500 5 1z" fill="#f0a63a"/><path d="M104 108c10-6 26-8 40-2 8 6 10 16 6 24-12 4-28-4-46-22z" fill="#27222f"/><path d="M134 112l16-5 4 17-15 6z" fill="#2b2437" stroke="#cf2a8c" stroke-width="1.500"/><path d="M114 138c12-6 28-4 36 4 4 10 2 20-4 26-12 2-26 0-34-6-2-8-2-16 2-24z" fill="#2b2a42"/><path d="M132 146c4 6 8 14 8 20M118 150l20 12" stroke="#cf2a8c" stroke-width="1.400" fill="none"/><path d="M66 150c10-6 30-8 46-4 6 4 8 10 4 16-16 4-36 4-48-2-3-3-4-7-2-10z" fill="#2a2530"/><path d="M65 151c-2 4-1 9 3 11l5-9z" fill="#c4188a"/><path d="M97 158c4-6 10-7 14-3-1 6-6 10-12 9z" fill="#c4188a"/><path d="M88 148l2 14M93 148l2 14" stroke="#ece8f2" stroke-width="1.500"/><text x="41.500" y="113.500" text-anchor="middle" font-family="Noto Sans CJK SC,Liberation Sans,sans-serif" font-weight="900" font-size="28" fill="#4f80c0">英</text><ellipse cx="40" cy="138" rx="18" ry="14" fill="#d4e8f8"/><path d="M34 130l-7.500 5 3.500 5.500 3.500-2v13h15v-13l3.500 2 3.500-5.500-7.500-5c-2 3-8 3-10 0z" fill="#4f80c0"/></svg>
<div class="abs" style="left:534.2px;top:320.3px;width:542.8px;height:1046.5px;background:#2b2d30;border:2px solid #45474c;border-radius:13px;box-shadow:0 6px 24px rgba(0,0,0,.45)"></div>
<div class="t " style="left:584.5px;top:327.8px;line-height:39px;height:39px;"><span class="cjk">新建</span>(<u>N</u>)</div>
<svg style="left:1047.5px;top:340.5px" width="9" height="15" viewBox="0 0 9 15" fill="none" ><path d="M1.3 1.3l6 6-6 6" stroke="#b4b8bf" stroke-width="1.4" stroke-linecap="round" stroke-linejoin="round"/></svg>
<div class="abs" style="left:550px;top:372.5px;width:515px;height:1px;background:#4a4c52;"></div>
<svg style="left:552.0px;top:387.8px" width="24" height="24" viewBox="0 0 16 16" fill="none" ><path d="M4.2 6.6a1.9 1.9 0 1 0 0-3.8 1.9 1.9 0 0 0 0 3.8zM4.2 13.2a1.9 1.9 0 1 0 0-3.8 1.9 1.9 0 0 0 0 3.8zM5.9 5.7l8.3 5.1M5.9 10.3l8.3-5.1" stroke="#ced0d6" fill="none" stroke-width="1.1" stroke-linecap="round" stroke-linejoin="round" /></svg>
<div class="t " style="left:584.5px;top:380.3px;line-height:39px;height:39px;"><span class="cjk">剪切</span>(<u>T</u>)</div>
<div class="t" style="right:1494.5px;top:382.6px;line-height:39px;height:39px;color:#7c8089">Ctrl+X</div>
<svg style="left:552.0px;top:426.8px" width="24" height="24" viewBox="0 0 16 16" fill="none" ><rect x="2.600" y="3.500" width="8.700" height="9.700" rx="1.900" stroke="#ced0d6" stroke-width="1.100"/><path d="M5.200 1.400h6.400a2 2 0 0 1 2 2v7.400" stroke="#ced0d6" fill="none" stroke-width="1.1" stroke-linecap="round" stroke-linejoin="round" /><path d="M4.900 6.700h4.200M4.900 8.500h4.200M4.900 10.300h4.200" stroke="#ced0d6" fill="none" stroke-width="1" stroke-linecap="round" stroke-linejoin="round" /></svg>
<div class="t " style="left:584.5px;top:419.3px;line-height:39px;height:39px;"><span class="cjk">复制</span>(<u>C</u>)</div>
<div class="t" style="right:1494.5px;top:421.6px;line-height:39px;height:39px;color:#7c8089">Ctrl+C</div>
<div class="t " style="left:584.5px;top:458.3px;line-height:39px;height:39px;"><span class="cjk">复制路径</span>/<span class="cjk">引用</span>...</div>
<svg style="left:552.0px;top:504.8px" width="24" height="24" viewBox="0 0 16 16" fill="none" ><rect x="2.600" y="2.500" width="10.900" height="11.700" rx="1.900" stroke="#ced0d6" stroke-width="1.100"/><rect x="5.800" y="1" width="4.500" height="2.300" rx=".900" stroke="#ced0d6" stroke-width="1.100" fill="#2b2d30"/><path d="M5.300 6.200h5.500M5.300 8.400h5.500M5.300 10.600h5.500" stroke="#ced0d6" fill="none" stroke-width="1" stroke-linecap="round" stroke-linejoin="round" /></svg>
<div class="t " style="left:584.5px;top:497.29999999999995px;line-height:39px;height:39px;"><span class="cjk">粘贴</span>(<u>P</u>)</div>
<div class="t" style="right:1494.5px;top:499.5999999999999px;line-height:39px;height:39px;color:#7c8089">Ctrl+V</div>
<div class="abs" style="left:550px;top:542.0px;width:515px;height:1px;background:#4a4c52;"></div>
<div class="t " style="left:584.5px;top:549.8px;line-height:39px;height:39px;"><span class="cjk">查找用法</span>(<u>U</u>)</div>
<div class="t" style="right:1494.5px;top:552.0999999999999px;line-height:39px;height:39px;color:#7c8089">Alt+F7</div>
<div class="t " style="left:584.5px;top:588.8px;line-height:39px;height:39px;"><span class="cjk">分析</span>(<u>Z</u>)</div>
<svg style="left:1047.5px;top:601.5px" width="9" height="15" viewBox="0 0 9 15" fill="none" ><path d="M1.3 1.3l6 6-6 6" stroke="#b4b8bf" stroke-width="1.4" stroke-linecap="round" stroke-linejoin="round"/></svg>
<div class="abs" style="left:550px;top:633.5px;width:515px;height:1px;background:#4a4c52;"></div>
<div class="t " style="left:584.5px;top:641.3px;line-height:39px;height:39px;"><span class="cjk">重构</span>(<u>R</u>)</div>
<svg style="left:1047.5px;top:654.0px" width="9" height="15" viewBox="0 0 9 15" fill="none" ><path d="M1.3 1.3l6 6-6 6" stroke="#b4b8bf" stroke-width="1.4" stroke-linecap="round" stroke-linejoin="round"/></svg>
<div class="abs" style="left:550px;top:686.0px;width:515px;height:1px;background:#4a4c52;"></div>
<div class="t " style="left:584.5px;top:693.8px;line-height:39px;height:39px;"><span class="cjk">书签</span></div>
<svg style="left:1047.5px;top:706.5px" width="9" height="15" viewBox="0 0 9 15" fill="none" ><path d="M1.3 1.3l6 6-6 6" stroke="#b4b8bf" stroke-width="1.4" stroke-linecap="round" stroke-linejoin="round"/></svg>
<div class="abs" style="left:550px;top:738.5px;width:515px;height:1px;background:#4a4c52;"></div>
<svg style="left:552.0px;top:753.8px" width="24" height="24" viewBox="0 0 16 16" fill="none" ><path d="M2.200 3.100h11.600M6.200 6.100h7.600M6.200 9.100h7.600M2.200 12.100h11.600" stroke="#ced0d6" fill="none" stroke-width="1.1" stroke-linecap="round" stroke-linejoin="round" /><path d="M1.900 5.300l3.200 2.300L1.900 9.900z" fill="#548af7"/></svg>
<div class="t " style="left:584.5px;top:746.3px;line-height:39px;height:39px;"><span class="cjk">重新格式化代码</span>(<u>R</u>)</div>
<div class="t" style="right:1494.5px;top:748.5999999999999px;line-height:39px;height:39px;color:#7c8089">Ctrl+Alt+L</div>
<div class="t " style="left:584.5px;top:785.3px;line-height:39px;height:39px;"><span class="cjk">优化</span> import(<u>Z</u>)</div>
<div class="t" style="right:1494.5px;top:787.5999999999999px;line-height:39px;height:39px;color:#7c8089">Ctrl+Alt+O</div>
<div class="abs" style="left:541.5px;top:826.0px;width:532.5px;height:36px;background:#2e436e;border-radius:7px"></div>
<div class="t " style="left:584.5px;top:824.3px;line-height:39px;height:39px;"><span class="cjk">删除</span>(<u>D</u>)...</div>
<div class="t" style="right:1494.5px;top:826.5999999999999px;line-height:39px;height:39px;color:#dfe1e5">Delete</div>
<div class="t " style="left:584.5px;top:863.3px;line-height:39px;height:39px;"><span class="cjk">重写文件类型</span></div>
<div class="abs" style="left:550px;top:908.0px;width:515px;height:1px;background:#4a4c52;"></div>
<svg style="left:550.0px;top:921.8px" width="27" height="27" viewBox="0 0 16 16" fill="none" ><path d="M4.3 2.9v10.2a.5.5 0 0 0 .76.43l8.1-5.1a.5.5 0 0 0 0-.86l-8.1-5.1a.5.5 0 0 0-.76.43z" stroke="#57965c" fill="#253627" stroke-width="1.0" stroke-linecap="round" stroke-linejoin="round" /></svg>
<div class="t " style="left:584.5px;top:915.8px;line-height:39px;height:39px;"><span class="cjk">运行</span> 'HelloWorld2.main()'(<u>U</u>)</div>
<div class="t" style="right:1494.5px;top:918.0999999999999px;line-height:39px;height:39px;color:#7c8089">Ctrl+Shift+F10</div>
<svg style="left:550.0px;top:960.8px" width="27" height="27" viewBox="0 0 16 16" fill="none" ><path d="M4.5 8.2c0-2 1.57-3.6 3.5-3.6s3.5 1.6 3.5 3.6v2c0 2-1.57 3.6-3.5 3.6s-3.5-1.6-3.5-3.6z" stroke="#57965c" fill="#253627" stroke-width="1.0" stroke-linecap="round" stroke-linejoin="round" /><path d="M5.6 5.3A2.45 2.45 0 0 1 8 2.3a2.45 2.45 0 0 1 2.4 3" stroke="#57965c" fill="#253627" stroke-width="1.0" stroke-linecap="round" stroke-linejoin="round" /><path d="M1.3 9.2h3.2M11.5 9.2h3.2M1.8 5.2l2.9 1.6M14.2 5.2l-2.9 1.6M1.8 13.4l2.9-1.7M14.2 13.4l-2.9-1.7" stroke="#57965c" fill="none" stroke-width="1.0" stroke-linecap="round" stroke-linejoin="round" /></svg>
<div class="t " style="left:584.5px;top:954.8px;line-height:39px;height:39px;"><span class="cjk">调试</span> 'HelloWorld2.main()'(<u>D</u>)</div>
<div class="t " style="left:584.5px;top:993.8px;line-height:39px;height:39px;"><span class="cjk">更多运行</span>/<span class="cjk">调试</span></div>
<svg style="left:1047.5px;top:1006.5px" width="9" height="15" viewBox="0 0 9 15" fill="none" ><path d="M1.3 1.3l6 6-6 6" stroke="#b4b8bf" stroke-width="1.4" stroke-linecap="round" stroke-linejoin="round"/></svg>
<div class="abs" style="left:550px;top:1038.5px;width:515px;height:1px;background:#4a4c52;"></div>
<svg style="left:552.0px;top:1053.8px" width="24" height="24" viewBox="0 0 16 16" fill="none" ><rect x="2" y="2.5" width="12" height="11" rx="1.8" stroke="#ced0d6" stroke-width="1.1"/><path d="M8 2.6v10.8" stroke="#ced0d6" fill="none" stroke-width="1.1" stroke-linecap="round" stroke-linejoin="round" /></svg>
<div class="t " style="left:584.5px;top:1046.3px;line-height:39px;height:39px;"><span class="cjk">在右侧拆分部分打开</span></div>
<div class="t" style="right:1494.5px;top:1048.6px;line-height:39px;height:39px;color:#7c8089">Shift+Enter</div>
<div class="t " style="left:584.5px;top:1085.3px;line-height:39px;height:39px;"><span class="cjk">打开于</span></div>
<svg style="left:1047.5px;top:1098.0px" width="9" height="15" viewBox="0 0 9 15" fill="none" ><path d="M1.3 1.3l6 6-6 6" stroke="#b4b8bf" stroke-width="1.4" stroke-linecap="round" stroke-linejoin="round"/></svg>
<div class="abs" style="left:550px;top:1130.0px;width:515px;height:1px;background:#4a4c52;"></div>
<div class="t " style="left:584.5px;top:1137.8px;line-height:39px;height:39px;"><span class="cjk">本地历史记录</span>(<u>H</u>)</div>
<svg style="left:1047.5px;top:1150.5px" width="9" height="15" viewBox="0 0 9 15" fill="none" ><path d="M1.3 1.3l6 6-6 6" stroke="#b4b8bf" stroke-width="1.4" stroke-linecap="round" stroke-linejoin="round"/></svg>
<div class="t " style="left:584.5px;top:1176.8px;line-height:39px;height:39px;"><span class="cjk">修复文件上的</span> IDE</div>
<svg style="left:552.0px;top:1223.3px" width="24" height="24" viewBox="0 0 16 16" fill="none" ><path d="M2.800 8.400A5.300 5.300 0 0 1 12.400 4.900M13.200 7.600A5.300 5.300 0 0 1 3.600 11.100M.700 6.400l2.100 2.100 2.100-2M15.300 9.600l-2.100-2.100-2.100 2" stroke="#ced0d6" fill="none" stroke-width="1.1" stroke-linecap="round" stroke-linejoin="round" /></svg>
<div class="t " style="left:584.5px;top:1215.8px;line-height:39px;height:39px;"><span class="cjk">从磁盘重新加载</span></div>
<div class="abs" style="left:550px;top:1260.5px;width:515px;height:1px;background:#4a4c52;"></div>
<svg style="left:552.0px;top:1275.8px" width="24" height="24" viewBox="0 0 16 16" fill="none" ><path d="M15.600 3.900H8.700M11.700 .900L8.600 3.900l3.100 3M.600 9.700h7.500M5.100 6.700l3.100 3-3.100 3" stroke="#ced0d6" fill="none" stroke-width="1.1" stroke-linecap="round" stroke-linejoin="round" /></svg>
<div class="t " style="left:584.5px;top:1268.3px;line-height:39px;height:39px;"><span class="cjk">比较对象</span>...</div>
<div class="t" style="right:1494.5px;top:1270.6px;line-height:39px;height:39px;color:#7c8089">Ctrl+D</div>
<div class="abs" style="left:550px;top:1313.0px;width:515px;height:1px;background:#4a4c52;"></div>
<div class="t " style="left:584.5px;top:1320.8px;line-height:39px;height:39px;"><span class="cjk">将</span> Java <span class="cjk">文件转换为</span> Kotlin <span class="cjk">文件</span></div>
<div class="t" style="right:1494.5px;top:1323.1px;line-height:39px;height:39px;color:#7c8089">Ctrl+Alt+Shift+K</div>
<div class="abs" style="left:439.3px;top:307.2px;width:94.3px;height:49.6px;background:rgba(0,0,0,.6);border-radius:4px"></div>
<svg style="left:431.4px;top:324.4px" width="8" height="14.6" viewBox="0 0 8 14.6" fill="none" ><path d="M8 0L0 7.3l8 7.300z" fill="rgba(0,0,0,.6)"/></svg>
<div class="abs" style="left:447.6px;top:308px;height:49.5px;line-height:50px;font-family:'Noto Sans CJK SC','Liberation Sans',sans-serif;font-size:24.5px;color:#fff">右键</div>
<div class="abs" style="left:395px;top:317px;width:30px;height:30px;border-radius:50%;background:#f8373a;color:#fff;text-align:center;line-height:29px;font-family:'Inter','Liberation Sans',sans-serif;font-size:18.5px;text-indent:-1px">1</div>
<div class="abs" style="left:760px;top:836px;width:30px;height:30px;border-radius:50%;background:#f8373a;color:#fff;text-align:center;line-height:29px;font-family:'Inter','Liberation Sans',sans-serif;font-size:18.5px;text-indent:-1px">2</div>
</body></html>
